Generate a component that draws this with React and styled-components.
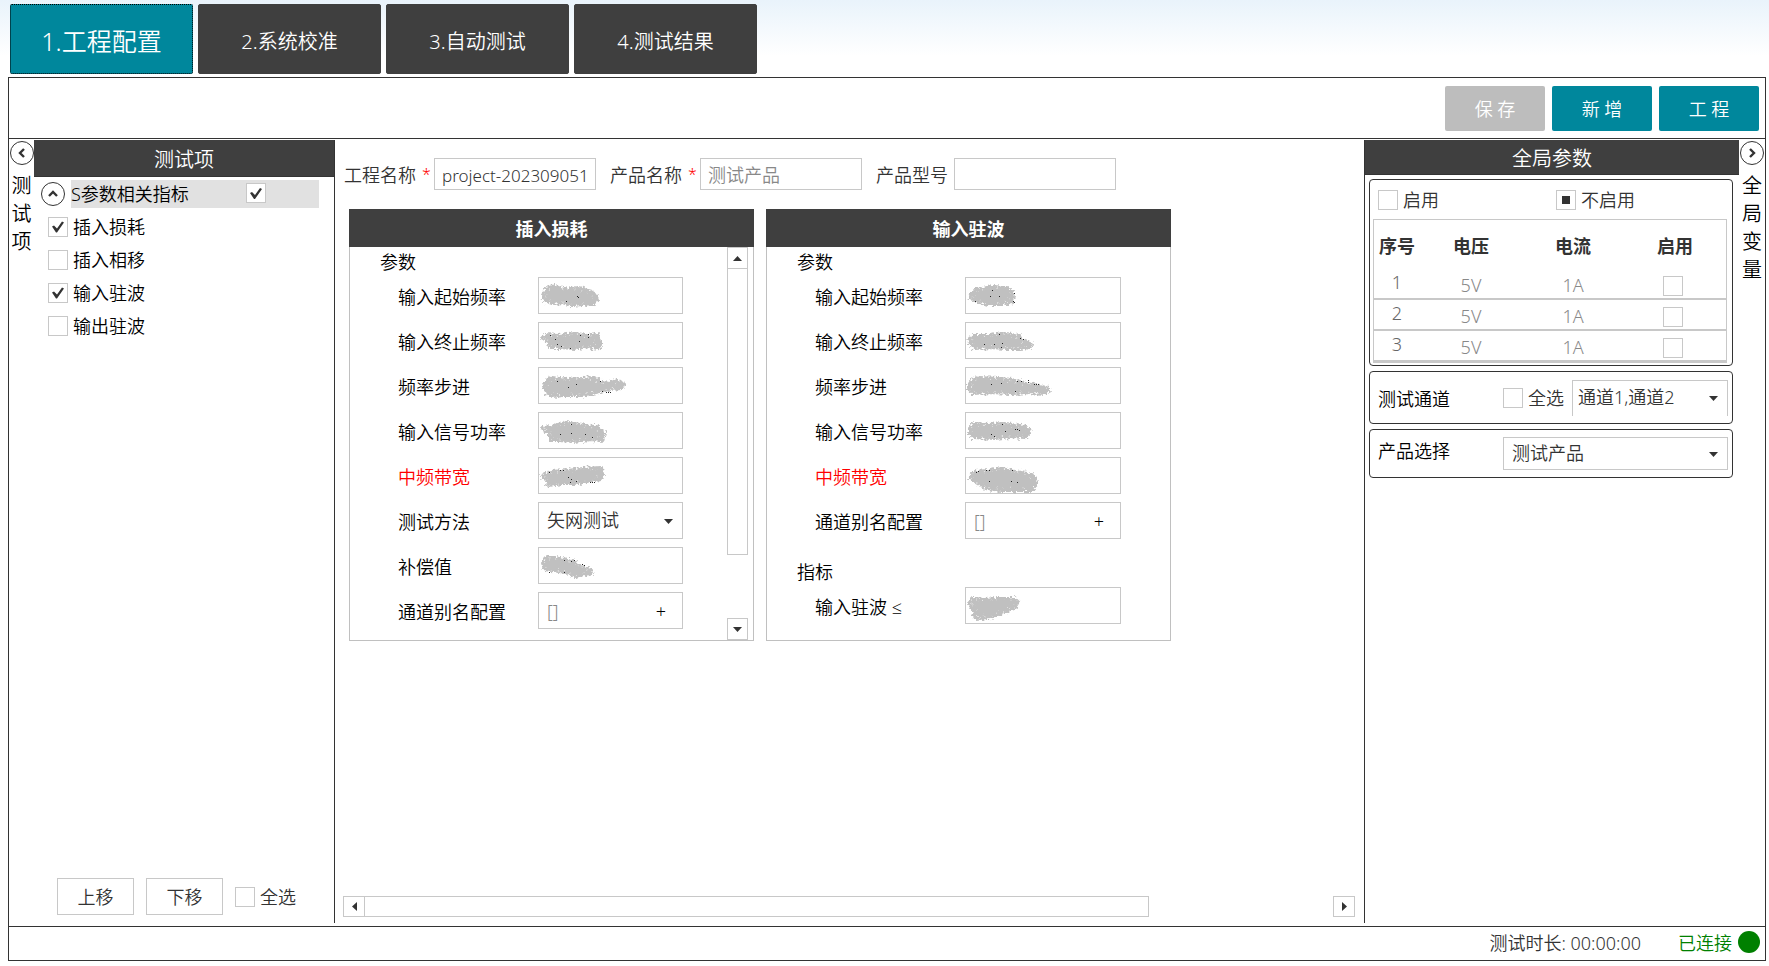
import React from "react";
import styled, { createGlobalStyle, css } from "styled-components";

const ink = "#333333";
const dark = "#3f3f3f";
const teal = "#00879c";
const line = "#c8c8c8";

const GlobalStyle = createGlobalStyle`
  *, *::before, *::after { box-sizing: border-box; }
  body { margin: 0; background: #fff; }
  body, button, input, select {
    font-family: "Noto Sans", "Open Sans", "Noto Sans CJK SC", sans-serif;
    font-size: 18px;
    font-weight: 350;
    color: ${ink};
  }
`;

const Page = styled.div`
  min-height: 100vh;
  display: flex;
  flex-direction: column;
  padding: 4px 3px 5px 8px;
  background: linear-gradient(#e9f3fb, #fff 56px);
`;

const Tabs = styled.nav`
  display: flex;
  gap: 5px;
  padding: 0 2px 3px;
`;

const Tab = styled.button`
  width: 183px;
  height: 70px;
  padding: 6px 0 0;
  border: 1px solid ${dark};
  border-radius: 2px;
  background: ${dark};
  color: #fff;
  font-size: 20px;
  line-height: 28px;
  ${(p) => p.$active && css`
    padding-top: 4px;
    border: 1px dotted #000;
    background: ${teal};
    font-size: 25px;
  `}
`;

const Frame = styled.div`
  flex: 1;
  display: flex;
  flex-direction: column;
  border: 1px solid ${ink};
  background: #fff;
`;

const Toolbar = styled.header`
  display: flex;
  justify-content: flex-end;
  gap: 7px;
  padding: 8px 6px 7px;
  border-bottom: 1px solid ${ink};
`;

const ToolButton = styled.button`
  width: 100px;
  height: 45px;
  padding: 0 0 1px;
  border: 0;
  border-radius: 2px;
  background: ${teal};
  color: #fff;
  white-space: pre;
  &:disabled { background: #bdbdbd; }
`;

const Body = styled.div`
  flex: 1;
  display: flex;
  padding: 1px 0 3px;
`;

const Strip = styled.div`
  width: ${(p) => p.$width}px;
  display: flex;
  flex-direction: column;
  align-items: center;
  gap: 7px;
  padding-top: 1px;
`;

const StripText = styled.div`
  width: 20px;
  font-size: 20px;
  line-height: 28px;
  color: #000;
  word-break: break-all;
`;

const RoundButton = styled.button`
  width: 24px;
  height: 24px;
  flex: none;
  display: grid;
  place-items: center;
  padding: 0;
  border: 1px solid ${ink};
  border-radius: 50%;
  background: #fff;
`;

const SidePanel = styled.aside`
  width: 301px;
  display: flex;
  flex-direction: column;
  border-right: 1px solid ${ink};
`;

const PanelTitle = styled.h2`
  margin: 0;
  height: ${(p) => p.$height}px;
  padding-top: 4px;
  background: ${dark};
  border-bottom: 1px solid ${ink};
  color: #fff;
  font-size: 20px;
  font-weight: 350;
  line-height: ${(p) => p.$height - 5}px;
  text-align: center;
`;

const GroupRow = styled.div`
  display: flex;
  align-items: center;
  gap: 6px;
  padding: 3px 15px 0 7px;
`;

const GroupLabel = styled.label`
  flex: 1;
  height: 28px;
  display: flex;
  align-items: center;
  justify-content: space-between;
  padding: 0 53px 2px 0;
  background: #e1e1e1;
  color: #000;
`;

const ItemList = styled.ul`
  flex: 1;
  list-style: none;
  margin: 0;
  padding: 2px 0 0 14px;
`;

const CheckLabel = styled.label`
  display: flex;
  align-items: center;
  gap: 5px;
  height: 33px;
  color: ${(p) => (p.$strong ? "#000" : ink)};
`;

const CheckText = styled.span`
  padding-bottom: 2px;
`;

const Tick = styled.input`
  appearance: none;
  flex: none;
  width: 20px;
  height: 20px;
  margin: 0;
  border: 1px solid ${line};
  background: #fff;
  display: grid;
  place-items: center;
  &[type="checkbox"]:checked::after {
    content: "";
    width: 12px;
    height: 12px;
    background: ${ink};
    clip-path: polygon(0 6px, 2px 5px, 5px 8px, 10px 1px, 12px 2px, 5px 12px, 4px 12px);
  }
  &[type="radio"]:checked::after {
    content: "";
    width: 8px;
    height: 8px;
    background: ${ink};
  }
`;

const SideFooter = styled.div`
  display: flex;
  align-items: center;
  gap: 12px;
  padding: 0 0 8px 23px;
`;

const MoveButton = styled.button`
  width: 77px;
  height: 37px;
  padding: 0 0 2px;
  border: 1px solid ${line};
  background: #fff;
`;

const Main = styled.main`
  flex: 1;
  min-width: 0;
  display: flex;
  flex-direction: column;
  padding: 18px 9px 6px 8px;
`;

const ProjectForm = styled.form`
  display: flex;
  gap: 14px;
  padding-left: 1px;
`;

const Field = styled.div`
  display: flex;
  align-items: center;
  gap: 6px;
`;

const Star = styled.span`
  width: 6px;
  color: #f00;
  font-size: 16px;
`;

const FieldInput = styled.input`
  width: 162px;
  height: 32px;
  padding: 2px 4px 0 7px;
  border: 1px solid ${line};
  background: #fff;
  font-size: ${(p) => (p.$latin ? 17 : 18)}px;
  &::placeholder { color: #888; opacity: 1; }
`;

const Cards = styled.div`
  flex: 1;
  display: flex;
  align-items: flex-start;
  gap: 12px;
  padding: 19px 0 0 6px;
`;

const Card = styled.section`
  width: 405px;
  height: 432px;
  display: flex;
  flex-direction: column;
  border: 1px solid #c0c0c0;
  border-top: 0;
`;

const CardTitle = styled.h3`
  margin: 0 -1px;
  height: 38px;
  padding-top: 2px;
  background: ${dark};
  color: #fff;
  font-size: 18px;
  font-weight: 700;
  line-height: 36px;
  text-align: center;
`;

const CardBody = styled.div`
  flex: 1;
  min-height: 0;
  display: flex;
  justify-content: space-between;
  padding-right: 5px;
`;

const Section = styled.fieldset`
  margin: 0 0 10px;
  padding: 0 0 0 48px;
  border: 0;
  color: #000;
`;

const Legend = styled.legend`
  margin-left: -18px;
  padding: 0;
  line-height: 30px;
`;

const Param = styled.div`
  display: grid;
  grid-template-columns: ${(p) => p.$label}px ${(p) => p.$field}px;
  align-items: center;
  margin-bottom: 8px;
`;

const ParamLabel = styled.label`
  color: ${(p) => (p.$alert ? "#f00" : "#000")};
`;

const Control = styled.div`
  position: relative;
  display: flex;
  height: ${(p) => p.$height || 37}px;
  ${(p) => p.$grow && css`flex: 1;`}
`;

const ControlInput = styled.input`
  width: 100%;
  padding: 0 8px;
  border: 1px solid ${line};
  background: #fff;
  color: #888;
`;

const Select = styled.select`
  appearance: none;
  width: 100%;
  padding: 0 24px 2px ${(p) => p.$inset || 8}px;
  border: 1px solid ${line};
  ${(p) => p.$open && css`border-bottom: 0;`}
  border-radius: 0;
  background: #fff;
`;

const Caret = styled.svg`
  position: absolute;
  right: 10px;
  top: 50%;
  margin-top: -2px;
  pointer-events: none;
`;

const AddButton = styled.button`
  position: absolute;
  top: 7px;
  right: 10px;
  width: 24px;
  height: 24px;
  padding: 0;
  border: 0;
  background: none;
  color: #000;
  line-height: 24px;
`;

const Mark = styled.svg`
  position: absolute;
  inset: 0;
  pointer-events: none;
`;

const ScrollV = styled.div`
  width: 21px;
  display: flex;
  flex-direction: column;
`;

const ScrollH = styled.div`
  display: flex;
  height: 21px;
`;

const ScrollButton = styled.button`
  flex: none;
  width: ${(p) => p.$width || 21}px;
  height: ${(p) => p.$height || 21}px;
  display: grid;
  place-items: center;
  padding: 0;
  border: 1px solid ${line};
  background: #fff;
`;

const Track = styled.div`
  flex: 1;
  display: flex;
  flex-direction: ${(p) => (p.$vertical ? "column" : "row")};
`;

const Thumb = styled.div`
  flex: 0 0 ${(p) => p.$size}%;
  border: 1px solid ${line};
  ${(p) => (p.$vertical ? "border-top: 0;" : "border-left: 0;")}
`;

const GlobalPanel = styled.aside`
  width: 375px;
  display: flex;
  flex-direction: column;
  border-left: 1px solid ${ink};
`;

const Boxes = styled.div`
  display: flex;
  flex-direction: column;
  gap: 5px;
  padding: 4px 6px 0 4px;
`;

const Box = styled.div`
  border: 1px solid ${ink};
  border-radius: 4px;
  padding: 3px 5px 2px 3px;
`;

const BoxRow = styled.div`
  display: flex;
  align-items: center;
  height: ${(p) => p.$height}px;
  padding: 0 4px 0 8px;
  border: 1px solid ${ink};
  border-radius: 4px;
`;

const RowName = styled.span`
  width: 125px;
  flex: none;
  padding-bottom: ${(p) => (p.$raised ? 8 : 0)}px;
  color: #000;
`;

const ChannelAll = styled.div`
  width: 69px;
  flex: none;
`;

const Radios = styled.div`
  display: grid;
  grid-template-columns: 178px 1fr;
  padding: 0 5px 3px;
`;

const Supply = styled.table`
  width: 354px;
  table-layout: fixed;
  border-collapse: separate;
  border-spacing: 0;
  border: 1px solid ${line};
  text-align: center;
  th {
    height: 49px;
    padding: 0;
    font-weight: 700;
  }
  td {
    height: 31px;
    padding: 3px 0 1px;
    border-bottom: 2px solid ${line};
    color: #888;
    line-height: 24px;
  }
  td:first-child { padding: 0 0 3px; color: #666; }
  td:last-child { padding: 4px 5px 0 39px; }
`;

const Status = styled.footer`
  display: flex;
  align-items: center;
  justify-content: flex-end;
  height: 34px;
  padding: 0 5px 3px 0;
  border-top: 1px solid ${ink};
`;

const Elapsed = styled.span`
  margin-right: 37px;
`;

const Connected = styled.span`
  margin-right: 6px;
  color: #008000;
`;

const Dot = styled.span`
  width: 22px;
  height: 22px;
  border-radius: 50%;
  background: #008000;
`;

const marks = {
  a1: ["M4 18L8 11 17 8 26 12 40 10 50 12 58 17 60 22 56 27 44 28 34 29 24 26 14 27 6 24Z", "39 19 40 20 28 24"],
  a2: ["M3 16L8 12 20 13 38 11 50 13 60 12 62 19 64 24 60 27 46 25 36 27 22 26 11 26 10 20Z", "12 13 17 17 42 13 50 12 50 15 19 22 23 24 32 26 41 19"],
  a3: ["M5 19L9 12 14 10 30 12 44 11 56 10 68 16 80 13 87 17 84 22 70 23 58 26 44 29 26 29 14 30 8 26Z", "19 14 38 17 62 14 64 24 68 25 70 25 72 25 30 20"],
  a4: ["M3 15L14 14 28 10 44 12 60 15 67 21 65 29 52 28 36 30 22 29 12 29 12 23 5 18Z", "33 12 22 22 33 21 54 25 47 22"],
  a5: ["M3 19L12 14 30 13 44 11 64 10 65 18 63 23 48 25 36 27 24 27 10 29 8 23Z", "11 15 22 13 25 13 30 20 33 22 32 25 38 24 52 25 54 25 56 25"],
  a6: ["M4 16L8 10 18 10 26 12 38 15 44 20 54 22 53 27 46 28 38 30 28 26 14 24 6 23Z", "26 13 33 14 36 13 44 17 46 18 11 25 26 25"],
  b1: ["M4 19L10 12 18 11 28 9 42 10 48 16 49 20 47 26 36 28 22 28 12 25 6 23Z", "27 13 25 19 34 19 49 16 10 24 49 25 48 24"],
  b2: ["M3 17L8 13 24 13 40 11 54 13 58 18 67 22 66 26 54 27 40 27 26 26 10 27 5 23Z", "34 12 55 16 58 17 19 22 37 21 36 25 29 22"],
  b3: ["M3 18L7 12 14 10 34 11 48 12 60 16 74 18 84 21 85 24 80 27 64 26 46 27 26 26 8 27 3 22Z", "52 14 56 14 63 13 63 15 69 17 71 17 73 17 26 17 36 16 50 24"],
  b4: ["M4 16L8 11 24 12 40 11 54 13 64 16 65 22 60 26 44 25 30 27 8 26 4 22Z", "37 12 50 17 52 17 54 18 40 19 26 22 29 24"],
  b5: ["M4 20L10 14 24 13 38 11 50 14 62 16 71 20 72 28 66 34 50 34 36 34 22 32 14 28 7 24Z", "11 15 13 14 21 13 24 13 47 13 24 24 46 24 52 25"],
  b6: ["M3 16L7 11 20 12 32 11 50 11 54 15 50 21 40 25 26 31 10 32 8 24Z", ""],
};

function Scribble({ id }) {
  const [shape, dots] = marks[id];
  const n = dots ? dots.split(" ").map(Number) : [];
  const specks = [];
  for (let i = 0; i < n.length; i += 2) specks.push([n[i], n[i + 1]]);
  return (
    <Mark width="100" height="37" aria-hidden="true">
      <filter id={`rough-${id}`}>
        <feTurbulence type="fractalNoise" baseFrequency="0.4" numOctaves="2" result="noise" />
        <feDisplacementMap in="SourceGraphic" in2="noise" scale="7" xChannelSelector="R" yChannelSelector="G" />
      </filter>
      <g filter={`url(#rough-${id})`}>
        <path d={shape} fill="#c0c0c0" stroke="#c0c0c0" strokeWidth="2" strokeLinejoin="round" />
        <path d={shape} fill="none" stroke="#fff" strokeWidth="1" strokeDasharray="1 7" transform="translate(4 4) scale(.85 .8)" />
      </g>
      {specks.map(([x, y]) => (
        <rect key={`${x}-${y}`} x={x} y={y} width="1" height="1" fill="#222" />
      ))}
    </Mark>
  );
}

const tri = {
  up: "M0 5L4.5 0L9 5Z",
  down: "M0 0L9 0L4.5 5Z",
  left: "M5 0L5 9L0 4.5Z",
  right: "M0 0L5 4.5L0 9Z",
};

function Triangle({ dir }) {
  return (
    <svg width="9" height="9" viewBox={dir === "up" || dir === "down" ? "0 -2 9 9" : "-2 0 9 9"} aria-hidden="true">
      <path d={tri[dir]} fill={ink} />
    </svg>
  );
}

function DropDown({ id, label, value, inset, open, grow, height }) {
  return (
    <Control $grow={grow} $height={height}>
      <Select id={id} aria-label={label} defaultValue={value} $inset={inset} $open={open}>
        <option>{value}</option>
      </Select>
      <Caret width="9" height="5" aria-hidden="true">
        <path d={tri.down} fill={ink} />
      </Caret>
    </Control>
  );
}

function Check({ children, strong, ...input }) {
  return (
    <CheckLabel $strong={strong}>
      <Tick type="checkbox" {...input} />
      <CheckText>{children}</CheckText>
    </CheckLabel>
  );
}

function Chevron({ d }) {
  return (
    <svg width="12" height="12" viewBox="0 0 12 12" fill="none" stroke={ink} strokeWidth="2.4" aria-hidden="true">
      <path d={d} />
    </svg>
  );
}

function ParamRow({ id, name, mark, alert, select, alias, label, field }) {
  return (
    <Param $label={label} $field={field}>
      <ParamLabel htmlFor={id} $alert={alert}>{name}</ParamLabel>
      {select ? (
        <DropDown id={id} value={select} />
      ) : (
        <Control>
          <ControlInput id={id} type="text" defaultValue={alias ? "[]" : ""} />
          {alias && <AddButton type="button" aria-label="添加">+</AddButton>}
          {mark && <Scribble id={mark} />}
        </Control>
      )}
    </Param>
  );
}

const lossParams = [
  { name: "输入起始频率", mark: "a1" },
  { name: "输入终止频率", mark: "a2" },
  { name: "频率步进", mark: "a3" },
  { name: "输入信号功率", mark: "a4" },
  { name: "中频带宽", mark: "a5", alert: true },
  { name: "测试方法", select: "矢网测试" },
  { name: "补偿值", mark: "a6" },
  { name: "通道别名配置", alias: true },
];

const waveParams = [
  { name: "输入起始频率", mark: "b1" },
  { name: "输入终止频率", mark: "b2" },
  { name: "频率步进", mark: "b3" },
  { name: "输入信号功率", mark: "b4" },
  { name: "中频带宽", mark: "b5", alert: true },
  { name: "通道别名配置", alias: true },
];

const items = [
  ["插入损耗", true],
  ["插入相移", false],
  ["输入驻波", true],
  ["输出驻波", false],
];

export default function App() {
  return (
    <Page>
      <GlobalStyle />
      <Tabs>
        <Tab type="button" $active>1.工程配置</Tab>
        <Tab type="button">2.系统校准</Tab>
        <Tab type="button">3.自动测试</Tab>
        <Tab type="button">4.测试结果</Tab>
      </Tabs>
      <Frame>
        <Toolbar>
          <ToolButton type="button" disabled>保 存</ToolButton>
          <ToolButton type="button">新 增</ToolButton>
          <ToolButton type="button">工 程</ToolButton>
        </Toolbar>
        <Body>
          <Strip $width={25}>
            <RoundButton type="button" aria-label="收起测试项"><Chevron d="M8 2L4 6L8 10" /></RoundButton>
            <StripText>测试项</StripText>
          </Strip>
          <SidePanel>
            <PanelTitle $height={37}>测试项</PanelTitle>
            <GroupRow>
              <RoundButton type="button" aria-label="收起分组"><Chevron d="M2 8L6 4L10 8" /></RoundButton>
              <GroupLabel>S参数相关指标<Tick type="checkbox" defaultChecked /></GroupLabel>
            </GroupRow>
            <ItemList>
              {items.map(([name, on]) => (
                <li key={name}>
                  <Check strong defaultChecked={on}>{name}</Check>
                </li>
              ))}
            </ItemList>
            <SideFooter>
              <MoveButton type="button">上移</MoveButton>
              <MoveButton type="button">下移</MoveButton>
              <Check>全选</Check>
            </SideFooter>
          </SidePanel>
          <Main>
            <ProjectForm>
              <Field>
                <label htmlFor="project">工程名称</label>
                <Star>*</Star>
                <FieldInput id="project" type="text" $latin defaultValue="project-202309051" />
              </Field>
              <Field>
                <label htmlFor="product">产品名称</label>
                <Star>*</Star>
                <FieldInput id="product" type="text" placeholder="测试产品" />
              </Field>
              <Field>
                <label htmlFor="model">产品型号</label>
                <FieldInput id="model" type="text" />
              </Field>
            </ProjectForm>
            <Cards>
              <Card>
                <CardTitle>插入损耗</CardTitle>
                <CardBody>
                  <Section>
                    <Legend>参数</Legend>
                    {lossParams.map((p, i) => (
                      <ParamRow key={p.name} id={`loss-${i}`} label={140} field={145} {...p} />
                    ))}
                  </Section>
                  <ScrollV>
                    <ScrollButton type="button" aria-label="向上滚动" $height={22}><Triangle dir="up" /></ScrollButton>
                    <Track $vertical><Thumb $vertical $size={82} /></Track>
                    <ScrollButton type="button" aria-label="向下滚动" $height={22}><Triangle dir="down" /></ScrollButton>
                  </ScrollV>
                </CardBody>
              </Card>
              <Card>
                <CardTitle>输入驻波</CardTitle>
                <div>
                  <Section>
                    <Legend>参数</Legend>
                    {waveParams.map((p, i) => (
                      <ParamRow key={p.name} id={`wave-${i}`} label={150} field={156} {...p} />
                    ))}
                  </Section>
                  <Section>
                    <Legend>指标</Legend>
                    <ParamRow id="wave-limit" name="输入驻波 ≤" mark="b6" label={150} field={156} />
                  </Section>
                </div>
              </Card>
            </Cards>
            <ScrollH>
              <ScrollButton type="button" aria-label="向左滚动" $width={22}><Triangle dir="left" /></ScrollButton>
              <Track><Thumb $size={81} /></Track>
              <ScrollButton type="button" aria-label="向右滚动" $width={22}><Triangle dir="right" /></ScrollButton>
            </ScrollH>
          </Main>
          <GlobalPanel>
            <PanelTitle $height={35}>全局参数</PanelTitle>
            <Boxes>
              <Box>
                <Radios>
                  <Check type="radio" name="supply">启用</Check>
                  <Check type="radio" name="supply" defaultChecked>不启用</Check>
                </Radios>
                <Supply>
                  <colgroup>
                    <col width="46" /><col width="102" /><col width="102" /><col width="102" />
                  </colgroup>
                  <thead>
                    <tr><th>序号</th><th>电压</th><th>电流</th><th>启用</th></tr>
                  </thead>
                  <tbody>
                    {[1, 2, 3].map((n) => (
                      <tr key={n}>
                        <td>{n}</td>
                        <td>5V</td>
                        <td>1A</td>
                        <td><Tick type="checkbox" aria-label={`启用 ${n}`} /></td>
                      </tr>
                    ))}
                  </tbody>
                </Supply>
              </Box>
              <BoxRow $height={53}>
                <RowName>测试通道</RowName>
                <ChannelAll><Check>全选</Check></ChannelAll>
                <DropDown grow open inset={5} height={36} label="测试通道" value="通道1,通道2" />
              </BoxRow>
              <BoxRow $height={49}>
                <RowName $raised>产品选择</RowName>
                <DropDown grow height={33} label="产品选择" value="测试产品" />
              </BoxRow>
            </Boxes>
          </GlobalPanel>
          <Strip $width={26}>
            <RoundButton type="button" aria-label="收起全局变量"><Chevron d="M4 2L8 6L4 10" /></RoundButton>
            <StripText>全局变量</StripText>
          </Strip>
        </Body>
        <Status>
          <Elapsed>测试时长: 00:00:00</Elapsed>
          <Connected>已连接</Connected>
          <Dot />
        </Status>
      </Frame>
    </Page>
  );
}
